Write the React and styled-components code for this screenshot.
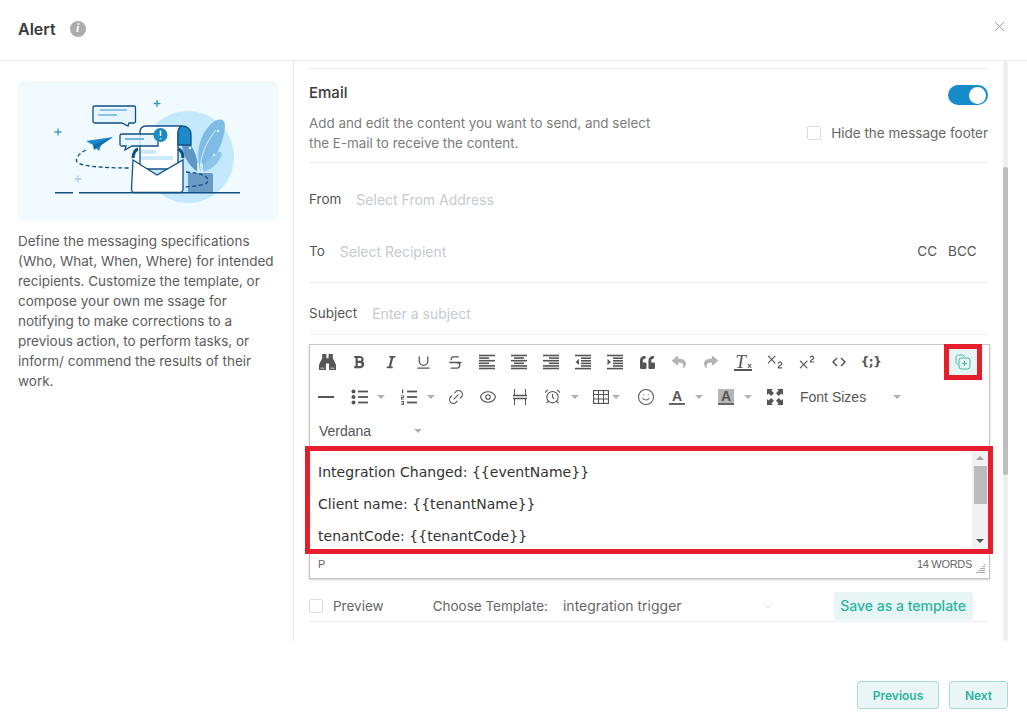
import React from 'react';
import styled, { createGlobalStyle } from 'styled-components';
import { FaBold, FaItalic, FaQuoteLeft, FaReply, FaShare } from 'react-icons/fa';
import { Underline, Strikethrough, Subscript, Superscript, Link2, Eye, AlarmClock, Smile, ChevronDown, X } from 'lucide-react';

const GlobalStyle = createGlobalStyle`
  html, body { margin: 0; padding: 0; background: #fff; }
  body { font-family: Inter, "Liberation Sans", sans-serif; color: #555; }
  * { box-sizing: border-box; }
`;

const Page = styled.div`
  width: 1027px;
  height: 728px;
  display: flex;
  flex-direction: column;
  background: #fff;
  overflow: hidden;
`;

const Header = styled.header`
  height: 61px;
  flex: none;
  display: flex;
  align-items: center;
  padding: 0 19px 3px 18px;
  border-bottom: 1px solid #ececec;
`;

const Title = styled.h1`
  margin: 0;
  font-size: 16px;
  font-weight: 600;
  color: #3a3a3a;
`;

const InfoDot = styled.span`
  width: 16px;
  height: 16px;
  margin-left: 14px;
  border-radius: 50%;
  background: #acacac;
  color: #fff;
  display: flex;
  align-items: center;
  justify-content: center;
  font: italic 700 12px "Liberation Serif", serif;
`;

const CloseBtn = styled.button`
  margin-left: auto;
  margin-top: -5px;
  padding: 0;
  border: 0;
  background: none;
  color: #8c8c8c;
  display: flex;
`;

const Body = styled.div`
  height: 580px;
  flex: none;
  display: flex;
`;

const Aside = styled.aside`
  width: 294px;
  flex: none;
  padding: 20px 15px 0 18px;
  border-right: 1px solid #e6e6e6;
`;

const Illustration = styled.div`
  height: 140px;
  border-radius: 6px;
  background: #f0faff;
  display: flex;
  svg { display: block; }
`;

const AsideText = styled.p`
  margin: 10px 0 0;
  font-size: 13.5px;
  line-height: 20px;
  color: #5c5c5c;
`;

const Main = styled.main`
  width: 679px;
  flex: none;
  margin-left: 15px;
`;

const Rule = styled.div`
  height: 8px;
  border-bottom: 1px solid #efefef;
`;

const EmailHead = styled.section`
  height: 94px;
  border-bottom: 1px solid #efefef;
  padding-top: 13px;
`;

const EmailRow = styled.div`
  display: flex;
  justify-content: space-between;
  align-items: center;
  height: 20px;
`;

const EmailTitle = styled.h2`
  margin: 0;
  font-size: 15px;
  font-weight: 500;
  color: #3a3a3a;
`;

const Toggle = styled.span`
  width: 40px;
  height: 20px;
  margin-top: 6px;
  border-radius: 10px;
  background: #168ccb;
  display: flex;
  justify-content: flex-end;
  align-items: center;
  padding-right: 2px;
  &::after {
    content: '';
    width: 17px;
    height: 17px;
    border-radius: 50%;
    background: #fff;
  }
`;

const EmailInfo = styled.div`
  display: flex;
  justify-content: space-between;
  align-items: center;
  margin-top: 11px;
`;

const Desc = styled.p`
  margin: 0;
  font-size: 13.4px;
  line-height: 20px;
  color: #7c7c7c;
`;

const CheckLabel = styled.label`
  display: flex;
  align-items: center;
  font-size: 13.5px;
  color: #666;
  margin-top: ${p => p.$top || 0}px;
`;

const Box = styled.span`
  width: 14px;
  height: 14px;
  margin-right: ${p => p.$gap}px;
  border: 1px solid #ddd;
  border-radius: 2px;
  background: #fff;
  flex: none;
`;

const Fields = styled.div`
  padding: 10px 0 5px;
  border-bottom: 1px solid #efefef;
`;

const FieldRow = styled.div`
  height: ${p => p.$h || 52}px;
  padding-top: ${p => p.$pt || 0}px;
  display: flex;
  align-items: center;
  font-size: 13.5px;
  color: #555;
  ${p => p.$line && 'border-bottom: 1px solid #efefef;'}
`;

const Placeholder = styled.span`
  margin-left: ${p => p.$ml}px;
  font-size: 14px;
  color: #c6c9d2;
`;

const Cc = styled.span`
  margin-left: ${p => p.$ml || 0}px;
  color: #555;
`;

const Editor = styled.div`
  width: 681px;
  height: 235px;
  margin-top: 9px;
  border: 1px solid #c5c5c5;
  box-shadow: 0 1px 2px rgba(0, 0, 0, 0.2);
  display: flex;
  flex-direction: column;
`;

const Toolbar = styled.div`
  height: 106px;
  flex: none;
  display: flex;
  flex-direction: column;
`;

const ToolRow = styled.div`
  height: ${p => p.$h || 34}px;
  display: flex;
  align-items: center;
  padding-left: ${p => p.$pl || 0}px;
  color: #555;
`;

const Tool = styled.span`
  width: 32px;
  height: 32px;
  flex: none;
  margin-left: ${p => p.$ml || 0}px;
  display: flex;
  align-items: center;
  justify-content: center;
  color: ${p => (p.$dim ? '#b4b4b4' : '#555')};
`;

const Caret = styled.span`
  width: 12px;
  height: 4px;
  flex: none;
  margin-left: ${p => p.$ml || 0}px;
  display: flex;
  justify-content: center;
  &::after {
    content: '';
    border-left: 4px solid transparent;
    border-right: 4px solid transparent;
    border-top: 4px solid #b2b2b2;
  }
`;

const ToolText = styled.span`
  margin-left: ${p => p.$ml || 0}px;
  font: 14px "Liberation Sans", Arial, sans-serif;
  color: #555;
`;

const BraceGlyph = styled.span`
  font: 700 12px "DejaVu Sans", sans-serif;
  letter-spacing: -0.5px;
`;

const ClearGlyph = styled.span`
  font: italic 400 19px "Liberation Serif", serif;
  border-bottom: 2px solid #555;
  line-height: 15px;
  padding: 0 6px 0 1px;
  position: relative;
  small {
    position: absolute;
    right: 0;
    bottom: -1px;
    font: 700 8px "Liberation Sans", sans-serif;
  }
`;

const ColorA = styled.span`
  width: 16px;
  height: 16px;
  display: flex;
  align-items: flex-start;
  justify-content: center;
  font: 700 14px/14px "Liberation Sans", sans-serif;
  color: #555;
  background: ${p => (p.$bg ? '#b5b5b5' : 'none')};
  border-bottom: 2px solid #666;
`;

const TemplateBtn = styled.button`
  width: 28px;
  height: 26px;
  margin-left: 62px;
  padding: 0;
  border: 0;
  background: #e6f5f3;
  color: #45b5a4;
  outline: 5px solid #e61e2b;
  display: flex;
  align-items: center;
  justify-content: center;
`;

const Content = styled.div`
  height: 98px;
  flex: none;
  display: flex;
  outline: 5px solid #e61e2b;
  margin-right: 1px;
`;

const ContentText = styled.div`
  flex: 1;
  padding: 12px 0 0 8px;
  overflow: hidden;
  font: 14px/18px "DejaVu Sans", Verdana, sans-serif;
  letter-spacing: 0.03px;
  color: #333;
  p { margin: 0 0 14px; }
`;

const ScrollTrack = styled.div`
  width: 16px;
  flex: none;
  background: #f1f1f1;
  display: flex;
  flex-direction: column;
  align-items: center;
  padding-top: 5px;
`;

const Arrow = styled.span`
  border-left: 4px solid transparent;
  border-right: 4px solid transparent;
  ${p => (p.$down ? 'border-top: 4px solid #505050; margin-top: auto; margin-bottom: 6px;' : 'border-bottom: 4px solid #a3a3a3;')}
`;

const ScrollThumb = styled.span`
  width: 13px;
  height: 38px;
  margin-top: 6px;
  background: #bcbcbc;
`;

const StatusBar = styled.div`
  flex: 1;
  display: flex;
  align-items: center;
  justify-content: space-between;
  padding: 0 3px 0 8px;
  font: 11px "Liberation Sans", Arial, sans-serif;
  color: #666;
`;

const Resize = styled.svg`
  margin-left: 4px;
  margin-top: 8px;
`;

const WordCount = styled.span`
  display: flex;
  align-items: center;
  letter-spacing: -0.3px;
`;

const PreviewRow = styled.div`
  border-bottom: 1px solid #efefef;
`;

const TemplateRow = styled.div`
  height: 31px;
  margin-top: 11px;
  display: flex;
  align-items: center;
  font-size: 13.5px;
  color: #666;
`;

const ChooseLabel = styled.span`
  margin-left: 49px;
`;

const TemplateName = styled.span`
  margin-left: 15px;
  font-size: 14px;
`;

const Chevron = styled.span`
  margin-left: 79px;
  color: #b8b8b8;
  display: flex;
`;

const SaveBtn = styled.button`
  width: 139px;
  height: 28px;
  margin-left: 59px;
  padding: 0;
  border: 0;
  border-radius: 3px;
  background: #e7f6f4;
  color: #2bb5a0;
  font: 500 14px Inter, sans-serif;
`;

const Track = styled.div`
  width: 5px;
  flex: none;
  margin-left: 15px;
  border-radius: 3px;
  background: #efefef;
`;

const Thumb = styled.div`
  height: 308px;
  margin-top: 106px;
  border-radius: 3px;
  background: #bdbdbd;
`;

const Footer = styled.footer`
  display: flex;
  justify-content: flex-end;
  gap: 10px;
  padding: 40px 19px 0 0;
`;

const FootBtn = styled.button`
  width: ${p => p.$w}px;
  height: 28px;
  padding: 0;
  border: 1px solid #a9dcd6;
  border-radius: 3px;
  background: #e9f6f5;
  color: #2bb5a0;
  font: 600 12px Inter, sans-serif;
`;

const Lines = ({ rows }) => (
  <svg width="16" height="16" viewBox="0 0 16 16" stroke="currentColor" strokeWidth="1.6">
    {rows.map(([a, b], i) => (
      <line key={i} x1={a} x2={b} y1={1.5 + i * 2.6} y2={1.5 + i * 2.6} />
    ))}
  </svg>
);

const Indent = ({ out }) => (
  <svg width="16" height="16" viewBox="0 0 16 16" stroke="currentColor" strokeWidth="1.6">
    <line x1="0" x2="16" y1="1.5" y2="1.5" />
    <line x1="6" x2="16" y1="4.2" y2="4.2" />
    <line x1="6" x2="16" y1="6.8" y2="6.8" />
    <line x1="6" x2="16" y1="9.4" y2="9.4" />
    <line x1="6" x2="16" y1="12" y2="12" />
    <line x1="0" x2="16" y1="14.6" y2="14.6" />
    <path d={out ? 'M4 5v6L0.5 8z' : 'M0.5 5v6L4 8z'} fill="currentColor" stroke="none" />
  </svg>
);

const Binoculars = () => (
  <svg width="17" height="16" viewBox="0 0 16 15" fill="currentColor">
    <path d="M3 0h4v4h2V0h4v4l3 6v5h-6.500V9h-3v6H0v-5l3-6z" />
    <path d="M1.500 13h3.500v.6H1.500zM11 13h3.500v.6H11z" fill="#fff" />
  </svg>
);

const CodeIcon = () => (
  <svg width="14" height="16" viewBox="0 0 14 16" fill="none" stroke="currentColor" strokeWidth="1.5">
    <path d="M5 4L1 8l4 4M9 4l4 4-4 4" />
  </svg>
);

const BulletIcon = () => (
  <svg width="17" height="16" viewBox="0 0 17 16" fill="currentColor">
    <circle cx="2.500" cy="2.500" r="2" />
    <circle cx="2.500" cy="8" r="2" />
    <circle cx="2.500" cy="13.500" r="2" />
    <rect x="7" y="1.600" width="10" height="1.800" />
    <rect x="7" y="7.100" width="10" height="1.800" />
    <rect x="7" y="12.600" width="10" height="1.800" />
  </svg>
);

const NumberIcon = () => (
  <svg width="17" height="16" viewBox="0 0 17 16" fill="currentColor">
    <rect x="2" y="0.500" width="1.200" height="4" />
    <path d="M1 6.500h3v2.200H2.200v1H4v.8H1V8h1.800V7.300H1z" />
    <path d="M1 12h3v4H1v-.8h2v-.8H1.600v-.7H3v-.9H1z" />
    <rect x="7" y="1.600" width="10" height="1.800" />
    <rect x="7" y="7.100" width="10" height="1.800" />
    <rect x="7" y="12.600" width="10" height="1.800" />
  </svg>
);

const PageBreak = () => (
  <svg width="16" height="16" viewBox="0 0 16 16" stroke="currentColor" strokeWidth="1" fill="none">
    <path d="M2.500 0v6M13.500 0v6M2.500 10v6M13.500 10v6" />
    <path d="M1 6.500h14M1 9.500h14" strokeWidth="1.300" />
  </svg>
);

const TableIcon = () => (
  <svg width="16" height="14" viewBox="0 0 16 14" stroke="currentColor" strokeWidth="1" fill="none">
    <rect x="0.500" y="0.500" width="15" height="13" strokeWidth="1.200" />
    <path d="M0.500 4.500h15M0.500 9h15M5.500 0.500v13M10.500 0.500v13" />
  </svg>
);

const FullIcon = () => (
  <svg width="16" height="16" viewBox="0 0 16 16" fill="currentColor">
    <path d="M0 0h6L4.400 1.600 7 4.200 4.200 7 1.600 4.400 0 6z" />
    <path d="M16 0v6l-1.600-1.600L11.800 7 9 4.200l2.600-2.600L10 0z" />
    <path d="M0 16v-6l1.600 1.600L4.200 9 7 11.800l-2.600 2.600L6 16z" />
    <path d="M16 16h-6l1.600-1.600L9 11.800 11.800 9l2.600 2.600L16 10z" />
  </svg>
);

const TemplateIcon = () => (
  <svg width="16" height="16" viewBox="0 0 16 16" fill="none" stroke="currentColor" strokeWidth="1">
    <path d="M3 10.500C1.500 10 1 9 1 7.500V3.500C1 2 2 1 3.500 1h3.500c1.300 0 2.300.8 2.600 2" />
    <rect x="4" y="4" width="11" height="11" rx="2.500" />
    <path d="M9.500 7v5M7 9.500h5" />
  </svg>
);

const Art = () => (
  <svg width="260" height="140" viewBox="18 81 260 140" fill="none">
    <circle cx="188" cy="157" r="46" fill="#c4e9fd" />
    {/* plant */}
    <path d="M200 172c-4-18-2-36 12-49 6-5 13-5 13 3-1 18-10 34-25 46z" fill="#7fbce5" />
    <path d="M202 172c1-8 8-16 16-20 3-1 5 1 3 5-4 8-10 13-19 15z" fill="#8cc6ea" />
    <path d="M198 172c-10-6-17-18-17-38 10 8 18 22 17 38z" fill="#5f97c4" />
    <path d="M200 172c0-16 6-30 16-42" stroke="#d8f0fd" strokeWidth="1" />
    <circle cx="218" cy="131" r="1.200" fill="#e3f4fd" />
    <circle cx="214" cy="155" r="1.200" fill="#e3f4fd" />
    <circle cx="190" cy="148" r="1.200" fill="#d8f0fd" />
    <path d="M198 163v10M202 163v10" stroke="#e3f4fd" strokeWidth="1.500" />
    <path d="M188 173h23c1.500 0 2 .8 2 2v17h-25z" fill="#6a9bc4" />
    {/* ground */}
    <path d="M55 192.700h18M79 192.700h161" stroke="#114f85" strokeWidth="1.600" />
    {/* sparkles */}
    <path d="M157 100v7M153.500 103.500h7M58 128.500v7M54.500 132h7" stroke="#3c94cb" strokeWidth="1.300" />
    <path d="M78 175.500v7M74.500 179h7" stroke="#a5cfe6" strokeWidth="1.300" />
    {/* route */}
    <path d="M86 150c-8 4-11 9-9 12 3 4 24 6 53 6" stroke="#114f85" strokeWidth="1.300" strokeDasharray="4 2.500" />
    <path d="M186 172c14 1 23 4 22 9-1 6-24 5-49 9" stroke="#114f85" strokeWidth="1.300" strokeDasharray="4 2.500" />
    {/* plane */}
    <path d="M113 137l-27 4 7 4 6 6 2-6z" fill="#1c8ac8" />
    <path d="M113 137l-20 8 1 5z" fill="#0f6fae" />
    {/* bubble one */}
    <path d="M95 106h39c1 0 1.500 .5 1.500 1.500v14c0 1-.5 1.500-1.500 1.500h-5l-1 3-6-3H95c-1 0-2-.5-2-1.500v-14c0-1 1-1.500 2-1.500z" fill="#e6f5fe" stroke="#114f85" strokeWidth="1.300" />
    <path d="M100 110h27M98 115h19" stroke="#2a8fca" strokeWidth="1.200" />
    {/* paper */}
    <path d="M146 126h36c-3 1-4 3-4 7v36h-38v-36c0-5 2-7 6-7z" fill="#fff" stroke="#114f85" strokeWidth="1.300" />
    <path d="M182 126c5 0 9 3 9 9v10h-13v-12c0-4 1-6 4-7z" fill="#1c8ac8" stroke="#114f85" strokeWidth="1.300" />
    <path d="M141 150h15v4h-15zM141 156h32v4h-32z" fill="#cdeafb" />
    {/* bubble two */}
    <path d="M122 134h36v12h-26l-7 4 1-4h-4c-1 0-2-1-2-1.500v-9c0-1 1-1.500 2-1.500z" fill="#e6f5fe" fillOpacity="0.85" stroke="#114f85" strokeWidth="1.300" />
    <path d="M125 139h19" stroke="#2a8fca" strokeWidth="1.200" />
    <circle cx="160.500" cy="135" r="7" fill="#1c8ac8" />
    <path d="M160.500 130.500v5.500M160.500 138v1.300" stroke="#fff" strokeWidth="1.500" />
    {/* envelope */}
    <path d="M138 149c-3 1-4.500 3-5 9M178 149c3 1 5 3 5 9" stroke="#114f85" strokeWidth="3" />
    <path d="M133 160l24 15 26-15v29c0 2-1.500 3.500-3.500 3.500H135c-2 0-3.500-1.500-3.500-3.500z" fill="#fff" stroke="#114f85" strokeWidth="1.300" />
  </svg>
);

export default function App() {
  return (
    <Page>
      <GlobalStyle />
      <Header>
        <Title>Alert</Title>
        <InfoDot>i</InfoDot>
        <CloseBtn><X size={17} strokeWidth={1.2} /></CloseBtn>
      </Header>
      <Body>
        <Aside>
          <Illustration><Art /></Illustration>
          <AsideText>
            Define the messaging specifications (Who, What, When, Where) for intended recipients. Customize the template, or compose your own me ssage for notifying to make corrections to a previous action, to perform tasks, or inform/ commend the results of their work.
          </AsideText>
        </Aside>
        <Main>
          <Rule />
          <EmailHead>
            <EmailRow>
              <EmailTitle>Email</EmailTitle>
              <Toggle />
            </EmailRow>
            <EmailInfo>
              <Desc>Add and edit the content you want to send, and select<br />the E-mail to receive the content.</Desc>
              <CheckLabel $top={-1}><Box $gap={10} />Hide the message footer</CheckLabel>
            </EmailInfo>
          </EmailHead>
          <Fields>
            <FieldRow>From<Placeholder $ml={15}>Select From Address</Placeholder></FieldRow>
            <FieldRow>
              To<Placeholder $ml={15}>Select Recipient</Placeholder>
              <Cc $ml={471}>CC</Cc><Cc $ml={11}>BCC</Cc>
            </FieldRow>
          </Fields>
          <FieldRow $h={52} $pt={9} $line>Subject<Placeholder $ml={15}>Enter a subject</Placeholder></FieldRow>
          <Editor>
            <Toolbar>
              <ToolRow $pl={1}>
                <Tool><Binoculars /></Tool>
                <Tool><FaBold size={14} /></Tool>
                <Tool><FaItalic size={14} /></Tool>
                <Tool><Underline size={17} strokeWidth={1.8} /></Tool>
                <Tool><Strikethrough size={17} strokeWidth={1.8} /></Tool>
                <Tool><Lines rows={[[0, 16], [0, 10], [0, 16], [0, 10], [0, 16], [0, 16]]} /></Tool>
                <Tool><Lines rows={[[0, 16], [3, 13], [0, 16], [3, 13], [0, 16], [0, 16]]} /></Tool>
                <Tool><Lines rows={[[0, 16], [6, 16], [0, 16], [6, 16], [0, 16], [0, 16]]} /></Tool>
                <Tool><Indent out /></Tool>
                <Tool><Indent /></Tool>
                <Tool><FaQuoteLeft size={15} /></Tool>
                <Tool $dim><FaReply size={14} /></Tool>
                <Tool $dim><FaShare size={14} /></Tool>
                <Tool><ClearGlyph>T<small>x</small></ClearGlyph></Tool>
                <Tool><Subscript size={20} strokeWidth={1.4} /></Tool>
                <Tool><Superscript size={20} strokeWidth={1.4} /></Tool>
                <Tool><CodeIcon /></Tool>
                <Tool><BraceGlyph>{'{;}'}</BraceGlyph></Tool>
                <TemplateBtn><TemplateIcon /></TemplateBtn>
              </ToolRow>
              <ToolRow $h={35}>
                <Tool><svg width="16" height="2"><rect width="16" height="2" fill="currentColor" /></svg></Tool>
                <Tool $ml={1}><BulletIcon /></Tool>
                <Caret />
                <Tool $ml={5}><NumberIcon /></Tool>
                <Caret $ml={1} />
                <Tool $ml={3}><Link2 size={18} strokeWidth={1.5} style={{ transform: 'rotate(-45deg)' }} /></Tool>
                <Tool><Eye size={18} strokeWidth={1.5} /></Tool>
                <Tool><PageBreak /></Tool>
                <Tool><AlarmClock size={17} strokeWidth={1.5} /></Tool>
                <Caret $ml={1} />
                <Tool $ml={4}><TableIcon /></Tool>
                <Caret $ml={-7} />
                <Tool $ml={8}><Smile size={18} strokeWidth={1.4} /></Tool>
                <Tool $ml={-1}><ColorA>A</ColorA></Tool>
                <Caret />
                <Tool $ml={5}><ColorA $bg>A</ColorA></Tool>
                <Caret />
                <Tool $ml={5}><FullIcon /></Tool>
                <ToolText $ml={9}>Font Sizes</ToolText>
                <Caret $ml={25} />
              </ToolRow>
              <ToolRow $pl={9}>
                <ToolText>Verdana</ToolText>
                <Caret $ml={41} />
              </ToolRow>
            </Toolbar>
            <Content>
              <ContentText>
                <p>Integration Changed: {'{{eventName}}'}</p>
                <p>Client name: {'{{tenantName}}'}</p>
                <p>tenantCode: {'{{tenantCode}}'}</p>
              </ContentText>
              <ScrollTrack>
                <Arrow />
                <ScrollThumb />
                <Arrow $down />
              </ScrollTrack>
            </Content>
            <StatusBar>
              <span>P</span>
              <WordCount>
                14 WORDS
                <Resize width="10" height="10" viewBox="0 0 10 10" stroke="#aaa" strokeWidth="1">
                  <path d="M8 1.500h1M6 3.500h3M4 5.500h5M2 7.500h7M0 9.500h9" />
                </Resize>
              </WordCount>
            </StatusBar>
          </Editor>
          <PreviewRow>
            <TemplateRow>
              <Box $gap={10} />
              <span>Preview</span>
              <ChooseLabel>Choose Template:</ChooseLabel>
              <TemplateName>integration trigger</TemplateName>
              <Chevron><ChevronDown size={14} strokeWidth={1} /></Chevron>
              <SaveBtn>Save as a template</SaveBtn>
            </TemplateRow>
          </PreviewRow>
        </Main>
        <Track><Thumb /></Track>
      </Body>
      <Footer>
        <FootBtn $w={82}>Previous</FootBtn>
        <FootBtn $w={59}>Next</FootBtn>
      </Footer>
    </Page>
  );
}
